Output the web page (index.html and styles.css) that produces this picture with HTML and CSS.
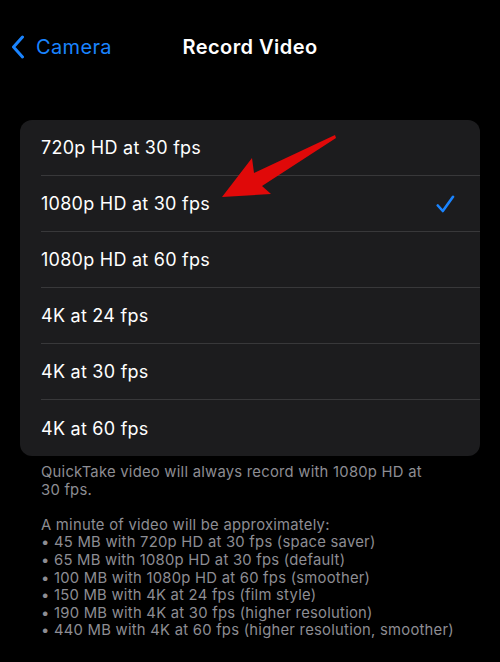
FILE: index.html
```html
<!DOCTYPE html>
<html>
<head>
<meta charset="utf-8">
<link rel="stylesheet" href="styles.css">
</head>
<body>
<div class="screen">
  <header class="nav">
    <div class="back">
      <svg class="chev" width="14" height="24" viewBox="0 0 14 24"><path d="M11.5 2 L2.5 12 L11.5 22" fill="none" stroke="#1a84ff" stroke-width="3" stroke-linecap="round" stroke-linejoin="round"/></svg>
      <span class="back-label">Camera</span>
    </div>
    <div class="title">Record Video</div>
    <div></div>
  </header>
  <div class="card">
    <div class="row"><span>720p HD at 30 fps</span></div>
    <div class="row"><span>1080p HD at 30 fps</span>
      <svg class="check" width="19" height="18" viewBox="0 0 19 18"><path d="M1.8 10.5 L6.8 16 L17 1.8" fill="none" stroke="#1a84ff" stroke-width="2.6" stroke-linecap="round" stroke-linejoin="round"/></svg>
    </div>
    <div class="row"><span>1080p HD at 60 fps</span></div>
    <div class="row"><span>4K at 24 fps</span></div>
    <div class="row"><span>4K at 30 fps</span></div>
    <div class="row"><span>4K at 60 fps</span></div>
    <svg class="arrow" width="500" height="662" viewBox="0 0 500 662"><polygon points="222,197 252,158 254,173 335,135 336,138 262,186 271,194" fill="#e00909"/></svg>
  </div>
  <div class="footer">
    <p>QuickTake video will always record with 1080p HD at<br>30 fps.</p>
    <p>A minute of video will be approximately:<br>
    • 45 MB with 720p HD at 30 fps (space saver)<br>
    • 65 MB with 1080p HD at 30 fps (default)<br>
    • 100 MB with 1080p HD at 60 fps (smoother)<br>
    • 150 MB with 4K at 24 fps (film style)<br>
    • 190 MB with 4K at 30 fps (higher resolution)<br>
    • 440 MB with 4K at 60 fps (higher resolution, smoother)</p>
  </div>
</div>
</body>
</html>
```
FILE: styles.css
```css
html, body {
  margin: 0;
  padding: 0;
  background: #000;
}
.screen {
  width: 500px;
  height: 662px;
  overflow: hidden;
  font-family: Inter, "Liberation Sans", sans-serif;
  color: #fff;
  position: relative;
}
.nav {
  height: 94px;
  display: grid;
  grid-template-columns: 1fr auto 1fr;
  align-items: center;
}
.back {
  display: flex;
  align-items: center;
  gap: 11px;
  padding-left: 11px;
}
.back-label {
  color: #1a84ff;
  font-size: 20px;
  letter-spacing: 0.35px;
}
.title {
  font-size: 20px;
  font-weight: 600;
  letter-spacing: 0.45px;
}
.card {
  margin: 26px 20px 0;
  background: #1c1c1e;
  border-radius: 12px;
  overflow: hidden;
}
.row {
  height: 56px;
  margin-left: 21px;
  padding-right: 25px;
  display: flex;
  align-items: center;
  justify-content: space-between;
  font-size: 18px;
  letter-spacing: 0.25px;
  border-bottom: 1px solid #38383a;
  box-sizing: border-box;
}
.row:last-of-type {
  border-bottom: none;
}
.arrow {
  position: absolute;
  left: 0;
  top: 0;
  pointer-events: none;
}
.footer {
  padding: 8px 20px 0 41px;
  color: #8d8d93;
  font-size: 14.8px;
  letter-spacing: 0.25px;
  line-height: 17.6px;
}
.footer p {
  margin: 0 0 17.6px;
}
```
